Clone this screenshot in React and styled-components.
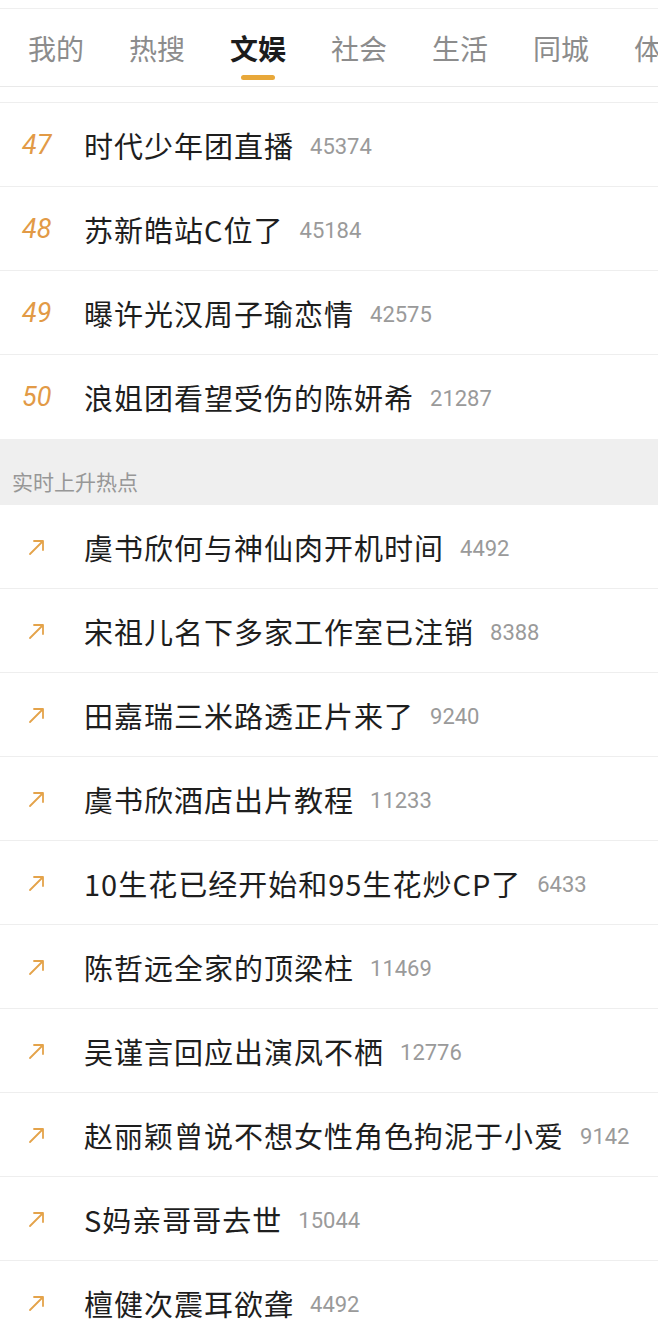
import React from 'react';
import styled, { createGlobalStyle } from 'styled-components';

const GlobalStyle = createGlobalStyle`
  html, body {
    margin: 0;
    padding: 0;
    background: #fff;
  }
  body {
    font-family: "Noto Sans CJK SC", "Noto Sans", sans-serif;
  }
`;

const Page = styled.div`
  width: 658px;
  height: 1336px;
  overflow: hidden;
  background: #fff;
`;

const TopEdge = styled.div`
  height: 8px;
  border-bottom: 1px solid #efefef;
`;

const TabBar = styled.nav`
  display: flex;
  gap: 45px;
  height: 78px;
  padding: 19px 0 0 28px;
  box-sizing: border-box;
  border-bottom: 1px solid #e9e9e9;
  overflow: hidden;
  white-space: nowrap;
`;

const Tab = styled.div`
  display: flex;
  flex-direction: column;
  align-items: center;
  gap: 7px;
  flex-shrink: 0;
  font-size: 28px;
  line-height: 40px;
  color: ${(p) => (p.$active ? '#1c1c1c' : '#8c8c8c')};
  font-weight: ${(p) => (p.$active ? 700 : 400)};
`;

const Indicator = styled.span`
  display: block;
  width: 34px;
  height: 5px;
  border-radius: 3px;
  background: ${(p) => (p.$active ? '#e8a83a' : 'transparent')};
`;

const Spacer = styled.div`
  height: 15px;
  border-bottom: 1px solid #eeeeee;
`;

const Row = styled.div`
  display: flex;
  align-items: center;
  height: 84px;
  box-sizing: border-box;
  border-bottom: ${(p) => (p.$last ? 'none' : '1px solid #eeeeee')};
  white-space: nowrap;
`;

const Lead = styled.div`
  width: 84px;
  flex-shrink: 0;
  box-sizing: border-box;
  padding-left: ${(p) => (p.$icon ? '28px' : '22px')};
  display: flex;
  align-items: center;
`;

const Rank = styled.span`
  font-family: "Roboto", "Noto Sans", sans-serif;
  font-style: italic;
  font-size: 27px;
  color: #e29a46;
`;

const Title = styled.span`
  font-size: 29px;
  letter-spacing: 1px;
  color: #1e1e1e;
`;

const Count = styled.span`
  margin-left: 16px;
  font-family: "Roboto", "Noto Sans", sans-serif;
  font-size: 22px;
  color: #9a9a9a;
  padding-top: 3px;
`;

const Section = styled.div`
  height: 66px;
  box-sizing: border-box;
  padding: 18px 0 0 12px;
  display: flex;
  align-items: center;
  background: #efefef;
  font-size: 21px;
  color: #979797;
`;

const RiseIcon = () => (
  <svg width="18" height="18" viewBox="0 0 18 18" fill="none">
    <path
      d="M2 16 L15 3 M6 3 H15 V12"
      stroke="#e4a34a"
      strokeWidth="1.8"
      strokeLinecap="round"
      strokeLinejoin="round"
    />
  </svg>
);

const tabs = ['我的', '热搜', '文娱', '社会', '生活', '同城', '体育'];

const ranked = [
  { rank: 47, title: '时代少年团直播', count: 45374 },
  { rank: 48, title: '苏新皓站C位了', count: 45184 },
  { rank: 49, title: '曝许光汉周子瑜恋情', count: 42575 },
  { rank: 50, title: '浪姐团看望受伤的陈妍希', count: 21287 },
];

const rising = [
  { title: '虞书欣何与神仙肉开机时间', count: 4492 },
  { title: '宋祖儿名下多家工作室已注销', count: 8388 },
  { title: '田嘉瑞三米路透正片来了', count: 9240 },
  { title: '虞书欣酒店出片教程', count: 11233 },
  { title: '10生花已经开始和95生花炒CP了', count: 6433 },
  { title: '陈哲远全家的顶梁柱', count: 11469 },
  { title: '吴谨言回应出演凤不栖', count: 12776 },
  { title: '赵丽颖曾说不想女性角色拘泥于小爱', count: 9142 },
  { title: 'S妈亲哥哥去世', count: 15044 },
  { title: '檀健次震耳欲聋', count: 4492 },
];

export default function App() {
  return (
    <Page>
      <GlobalStyle />
      <TopEdge />
      <TabBar>
        {tabs.map((t) => (
          <Tab key={t} $active={t === '文娱'}>
            {t}
            <Indicator $active={t === '文娱'} />
          </Tab>
        ))}
      </TabBar>
      <Spacer />
      {ranked.map((r, i) => (
        <Row key={r.rank} $last={i === ranked.length - 1}>
          <Lead>
            <Rank>{r.rank}</Rank>
          </Lead>
          <Title>{r.title}</Title>
          <Count>{r.count}</Count>
        </Row>
      ))}
      <Section>实时上升热点</Section>
      {rising.map((r) => (
        <Row key={r.title}>
          <Lead $icon>
            <RiseIcon />
          </Lead>
          <Title>{r.title}</Title>
          <Count>{r.count}</Count>
        </Row>
      ))}
    </Page>
  );
}
